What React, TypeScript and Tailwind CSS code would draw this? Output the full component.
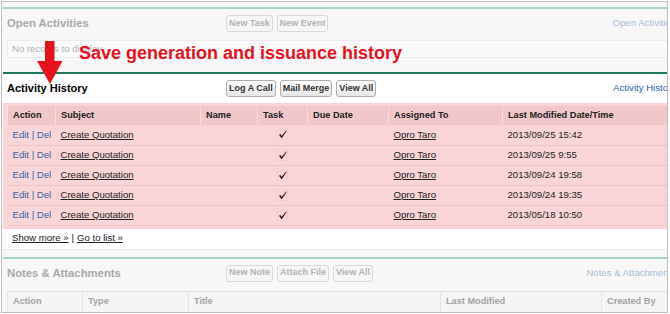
import React from 'react';

const dates = ['2013/09/25 15:42', '2013/09/25 9:55', '2013/09/24 19:58', '2013/09/24 19:35', '2013/05/18 10:50'];

function Btn({ label, faded = false }: { label: string; faded?: boolean }) {
  return (
    <span
      className={
        faded
          ? 'flex h-[17px] items-center rounded-[3px] border border-[#d9d9d9] bg-[#f6f6f6] px-[2px] text-[9px] font-bold text-[#b3b3b3]'
          : 'flex h-[17px] items-center rounded-[3px] border border-[#aeaeae] bg-linear-to-b from-white to-[#e6e6e6] px-[2px] text-[9px] font-bold text-[#333]'
      }
    >
      {label}
    </span>
  );
}

function BlockHeader({ title, buttons, link, faded = false }: { title: string; buttons: string[]; link: string; faded?: boolean }) {
  return (
    <div className="flex h-[29px] items-center">
      <div className={faded ? 'w-[223px] pl-[4px] text-[11.3px] font-bold text-[#a9a9a9]' : 'w-[223px] pl-[4px] text-[11px] font-bold text-black'}>
        {title}
      </div>
      <div className="flex gap-[4px]">
        {buttons.map((b) => (
          <Btn key={b} label={b} faded={faded} />
        ))}
      </div>
      <div className={faded ? 'ml-auto whitespace-nowrap pr-[1px] text-[9.6px] text-[#a8bdd6]' : 'ml-auto whitespace-nowrap pr-[1px] text-[9.6px] text-[#2b5fa6]'}>
        {link}
      </div>
    </div>
  );
}

function Check() {
  return (
    <svg width="11" height="11" viewBox="0 0 11 11" className="mx-auto block">
      <rect x="0.5" y="0.5" width="10" height="10" fill="none" stroke="#ecc4c6" strokeDasharray="1 1" />
      <path d="M2 5.8 L3.4 4.9 L4.6 7 L9.2 1.6 L9.6 2 L4.7 9.3 Z" fill="#111" />
    </svg>
  );
}

function ActivityTable() {
  const th = 'h-[19px] border-l border-[#f9dcde] px-[5px] text-left text-[9.2px] font-bold text-[#222]';
  const td = 'h-[20px] border-b border-[#efc3c6] px-[5px] text-[9.6px] text-[#222]';
  return (
    <table className="mx-[4px] w-[666px] table-fixed border-collapse">
      <colgroup>
        <col className="w-[48px]" />
        <col className="w-[145px]" />
        <col className="w-[57px]" />
        <col className="w-[50px]" />
        <col className="w-[81px]" />
        <col className="w-[114px]" />
        <col />
      </colgroup>
      <thead className="bg-[#f1c7ca]">
        <tr>
          <th className={th}>Action</th>
          <th className={th}>Subject</th>
          <th className={th}>Name</th>
          <th className={th + ' text-center'}>Task</th>
          <th className={th}>Due Date</th>
          <th className={th}>Assigned To</th>
          <th className={th}>Last Modified Date/Time</th>
        </tr>
      </thead>
      <tbody>
        {dates.map((d) => (
          <tr key={d}>
            <td className="h-[20px] whitespace-nowrap border-b border-[#efc3c6] px-[5px] text-[9.6px] text-[#3464a8]">Edit | Del</td>
            <td className={td}>
              <span className="underline">Create Quotation</span>
            </td>
            <td className={td}></td>
            <td className={td}>
              <Check />
            </td>
            <td className={td}></td>
            <td className={td}>
              <span className="underline">Opro Taro</span>
            </td>
            <td className={td}>{d}</td>
          </tr>
        ))}
      </tbody>
    </table>
  );
}

export default function App() {
  return (
    <div className="h-[314px] w-[670px] bg-white pl-[1px] pt-[1px] font-['Liberation_Sans',Arial,Helvetica,sans-serif]">
      <div className="relative h-[312px] w-[667px] overflow-hidden border border-[#c0c0c0] bg-[#f7f7f7] pl-[1px] pt-[5px]">
        <div className="w-[674px]">
          {/* Open Activities (faded) */}
          <div className="h-[65px] border-t-2 border-[#a4d4c7]">
            <BlockHeader title="Open Activities" buttons={['New Task', 'New Event']} link="Open Activities" faded />
            <div className="mx-[4px] mt-[2px] flex h-[18px] items-center border border-[#ebebeb] bg-[#fafafa] px-[4px] text-[9.6px] text-[#b0b0b0]">
              No records to display
            </div>
          </div>

          {/* Activity History */}
          <div className="border-t-2 border-[#1f7a60] bg-white">
            <BlockHeader title="Activity History" buttons={['Log A Call', 'Mail Merge', 'View All']} link="Activity History" />
            <div className="bg-[#f9d5d7] pb-[3px] pt-[3px]">
              <ActivityTable />
            </div>
            <div className="flex h-[21px] items-center border-b border-[#e6e6e6] pl-[9px] text-[9.6px] text-[#222]">
              <span className="underline">Show more »</span>
              <span className="px-[3px]">|</span>
              <span className="underline">Go to list »</span>
            </div>
          </div>

          {/* Notes & Attachments (faded) */}
          <div className="mt-[7px] border-t-2 border-[#a4d4c7]">
            <BlockHeader title="Notes & Attachments" buttons={['New Note', 'Attach File', 'View All']} link="Notes & Attachments" faded />
            <div className="mx-[4px] mt-[3px] flex h-[22px] border-t border-[#e4e4e4] bg-[#f5f5f5] text-[9.2px] font-bold text-[#a3a3a3]">
              <div className="flex w-[75px] items-center border-l border-[#e6e6e6] px-[5px]">Action</div>
              <div className="flex w-[106px] items-center border-l border-[#e6e6e6] px-[5px]">Type</div>
              <div className="flex w-[252px] items-center border-l border-[#e6e6e6] px-[5px]">Title</div>
              <div className="flex w-[161px] items-center border-l border-[#e6e6e6] px-[5px]">Last Modified</div>
              <div className="flex flex-1 items-center border-l border-[#e6e6e6] px-[5px]">Created By</div>
            </div>
          </div>
        </div>

        {/* annotation overlay */}
        <div className="absolute left-[77px] top-[41px] whitespace-nowrap text-[18px] font-bold leading-[20px] text-[#e8101a]">
          Save generation and issuance history
        </div>
        <svg className="absolute left-[34px] top-[39px]" width="28" height="44" viewBox="0 0 28 44">
          <rect x="9" y="0" width="9.5" height="21" fill="#e8101a" />
          <polygon points="1,20 26.5,20 14,43" fill="#e8101a" />
        </svg>
      </div>
    </div>
  );
}
